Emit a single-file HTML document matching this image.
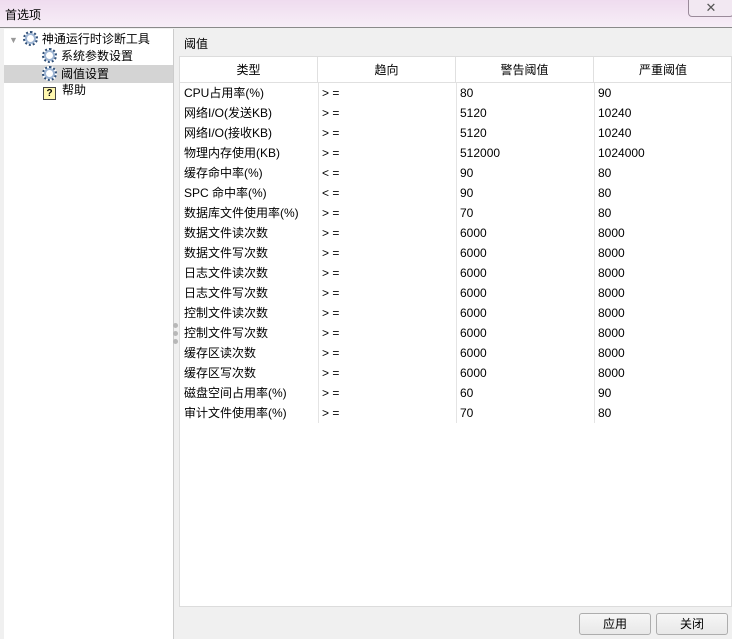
<!DOCTYPE html>
<html><head><meta charset="utf-8"><style>
*{margin:0;padding:0;box-sizing:border-box}
body{width:732px;height:639px;overflow:hidden;background:#f0f0f0;font-family:"Liberation Sans","Noto Sans CJK SC",sans-serif;font-size:12px;color:#000;position:relative}
.title{position:absolute;left:0;top:0;width:732px;height:28px;background:linear-gradient(#efdcef,#f7eef7);border-bottom:1px solid #8a8a8a}
.title span{position:absolute;left:5px;top:6px;font-size:12px}
.close{position:absolute;left:688px;top:-1px;width:46px;height:18px;border:1px solid #9a8a9a;border-radius:0 0 4px 4px;background:#f2e8f2;text-align:center;font-size:13px;color:#555;line-height:16px}
.left{position:absolute;left:4px;top:29px;width:170px;height:610px;background:#fff;border-right:1px solid #ccc}
.item{position:absolute;height:17px;line-height:17px;white-space:nowrap}
.gear{display:inline-block;width:15px;height:15px;border-radius:50%;border:2px dotted #2f4f78;box-shadow:inset 0 0 0 2px #9fb6d4;vertical-align:-3px;margin-right:4px;background:#fff}
.q{display:inline-block;width:13px;height:13px;border:1px solid #444;background:#fff8b0;font-size:10px;font-weight:bold;text-align:center;line-height:11px;vertical-align:-2px;margin-right:6px}
.sel{position:absolute;left:0;top:36px;width:169px;height:18px;background:#d4d4d4}
.lbl{position:absolute;left:184px;top:35px;font-size:12px}
.tbl{position:absolute;left:179px;top:56px;width:553px;height:551px;background:#fff;border:1px solid #dcdcdc}
.hd{position:absolute;top:0;height:26px;line-height:26px;text-align:center;border-right:1px solid #e0e0e0;border-bottom:1px solid #e0e0e0}
.row{position:absolute;left:0;height:20px;line-height:20px;width:552px}
.row span{position:absolute;top:0}
.vl{position:absolute;top:26px;height:340px;width:1px;background:#e4e4e4}
.btn{position:absolute;top:613px;width:72px;height:22px;border:1px solid #adadad;border-radius:3px;background:linear-gradient(#f6f6f6,#e8e8e8);text-align:center;line-height:20px}
.grip{position:absolute;left:173px;width:5px;height:5px;border-radius:50%;background:#b8b8b8}
</style></head><body>
<div class="title"><span>首选项</span><div class="close">✕</div></div>
<div class="left">
<div class="sel"></div>
<div class="item" style="left:5px;top:2px"><span style="color:#999;font-size:9px;margin-right:5px">▼</span><span class="gear"></span>神通运行时诊断工具</div>
<div class="item" style="left:38px;top:19px"><span class="gear"></span>系统参数设置</div>
<div class="item" style="left:38px;top:37px"><span class="gear"></span>阈值设置</div>
<div class="item" style="left:39px;top:53px"><span class="q">?</span>帮助</div>
</div>
<div class="grip" style="top:323px"></div><div class="grip" style="top:331px"></div><div class="grip" style="top:339px"></div>
<div class="lbl">阈值</div>
<div class="tbl">
<div class="hd" style="left:0;width:138px">类型</div>
<div class="hd" style="left:138px;width:138px">趋向</div>
<div class="hd" style="left:276px;width:138px">警告阈值</div>
<div class="hd" style="left:414px;width:138px;border-right:none">严重阈值</div>
<div class="vl" style="left:138px"></div><div class="vl" style="left:276px"></div><div class="vl" style="left:414px"></div>
<div class="row" style="top:26px"><span style="left:4px">CPU占用率(%)</span><span style="left:142px">&gt; =</span><span style="left:280px">80</span><span style="left:418px">90</span></div>
<div class="row" style="top:46px"><span style="left:4px">网络I/O(发送KB)</span><span style="left:142px">&gt; =</span><span style="left:280px">5120</span><span style="left:418px">10240</span></div>
<div class="row" style="top:66px"><span style="left:4px">网络I/O(接收KB)</span><span style="left:142px">&gt; =</span><span style="left:280px">5120</span><span style="left:418px">10240</span></div>
<div class="row" style="top:86px"><span style="left:4px">物理内存使用(KB)</span><span style="left:142px">&gt; =</span><span style="left:280px">512000</span><span style="left:418px">1024000</span></div>
<div class="row" style="top:106px"><span style="left:4px">缓存命中率(%)</span><span style="left:142px">&lt; =</span><span style="left:280px">90</span><span style="left:418px">80</span></div>
<div class="row" style="top:126px"><span style="left:4px">SPC 命中率(%)</span><span style="left:142px">&lt; =</span><span style="left:280px">90</span><span style="left:418px">80</span></div>
<div class="row" style="top:146px"><span style="left:4px">数据库文件使用率(%)</span><span style="left:142px">&gt; =</span><span style="left:280px">70</span><span style="left:418px">80</span></div>
<div class="row" style="top:166px"><span style="left:4px">数据文件读次数</span><span style="left:142px">&gt; =</span><span style="left:280px">6000</span><span style="left:418px">8000</span></div>
<div class="row" style="top:186px"><span style="left:4px">数据文件写次数</span><span style="left:142px">&gt; =</span><span style="left:280px">6000</span><span style="left:418px">8000</span></div>
<div class="row" style="top:206px"><span style="left:4px">日志文件读次数</span><span style="left:142px">&gt; =</span><span style="left:280px">6000</span><span style="left:418px">8000</span></div>
<div class="row" style="top:226px"><span style="left:4px">日志文件写次数</span><span style="left:142px">&gt; =</span><span style="left:280px">6000</span><span style="left:418px">8000</span></div>
<div class="row" style="top:246px"><span style="left:4px">控制文件读次数</span><span style="left:142px">&gt; =</span><span style="left:280px">6000</span><span style="left:418px">8000</span></div>
<div class="row" style="top:266px"><span style="left:4px">控制文件写次数</span><span style="left:142px">&gt; =</span><span style="left:280px">6000</span><span style="left:418px">8000</span></div>
<div class="row" style="top:286px"><span style="left:4px">缓存区读次数</span><span style="left:142px">&gt; =</span><span style="left:280px">6000</span><span style="left:418px">8000</span></div>
<div class="row" style="top:306px"><span style="left:4px">缓存区写次数</span><span style="left:142px">&gt; =</span><span style="left:280px">6000</span><span style="left:418px">8000</span></div>
<div class="row" style="top:326px"><span style="left:4px">磁盘空间占用率(%)</span><span style="left:142px">&gt; =</span><span style="left:280px">60</span><span style="left:418px">90</span></div>
<div class="row" style="top:346px"><span style="left:4px">审计文件使用率(%)</span><span style="left:142px">&gt; =</span><span style="left:280px">70</span><span style="left:418px">80</span></div>
</div>
<div class="btn" style="left:579px">应用</div>
<div class="btn" style="left:656px">关闭</div>
</body></html>
